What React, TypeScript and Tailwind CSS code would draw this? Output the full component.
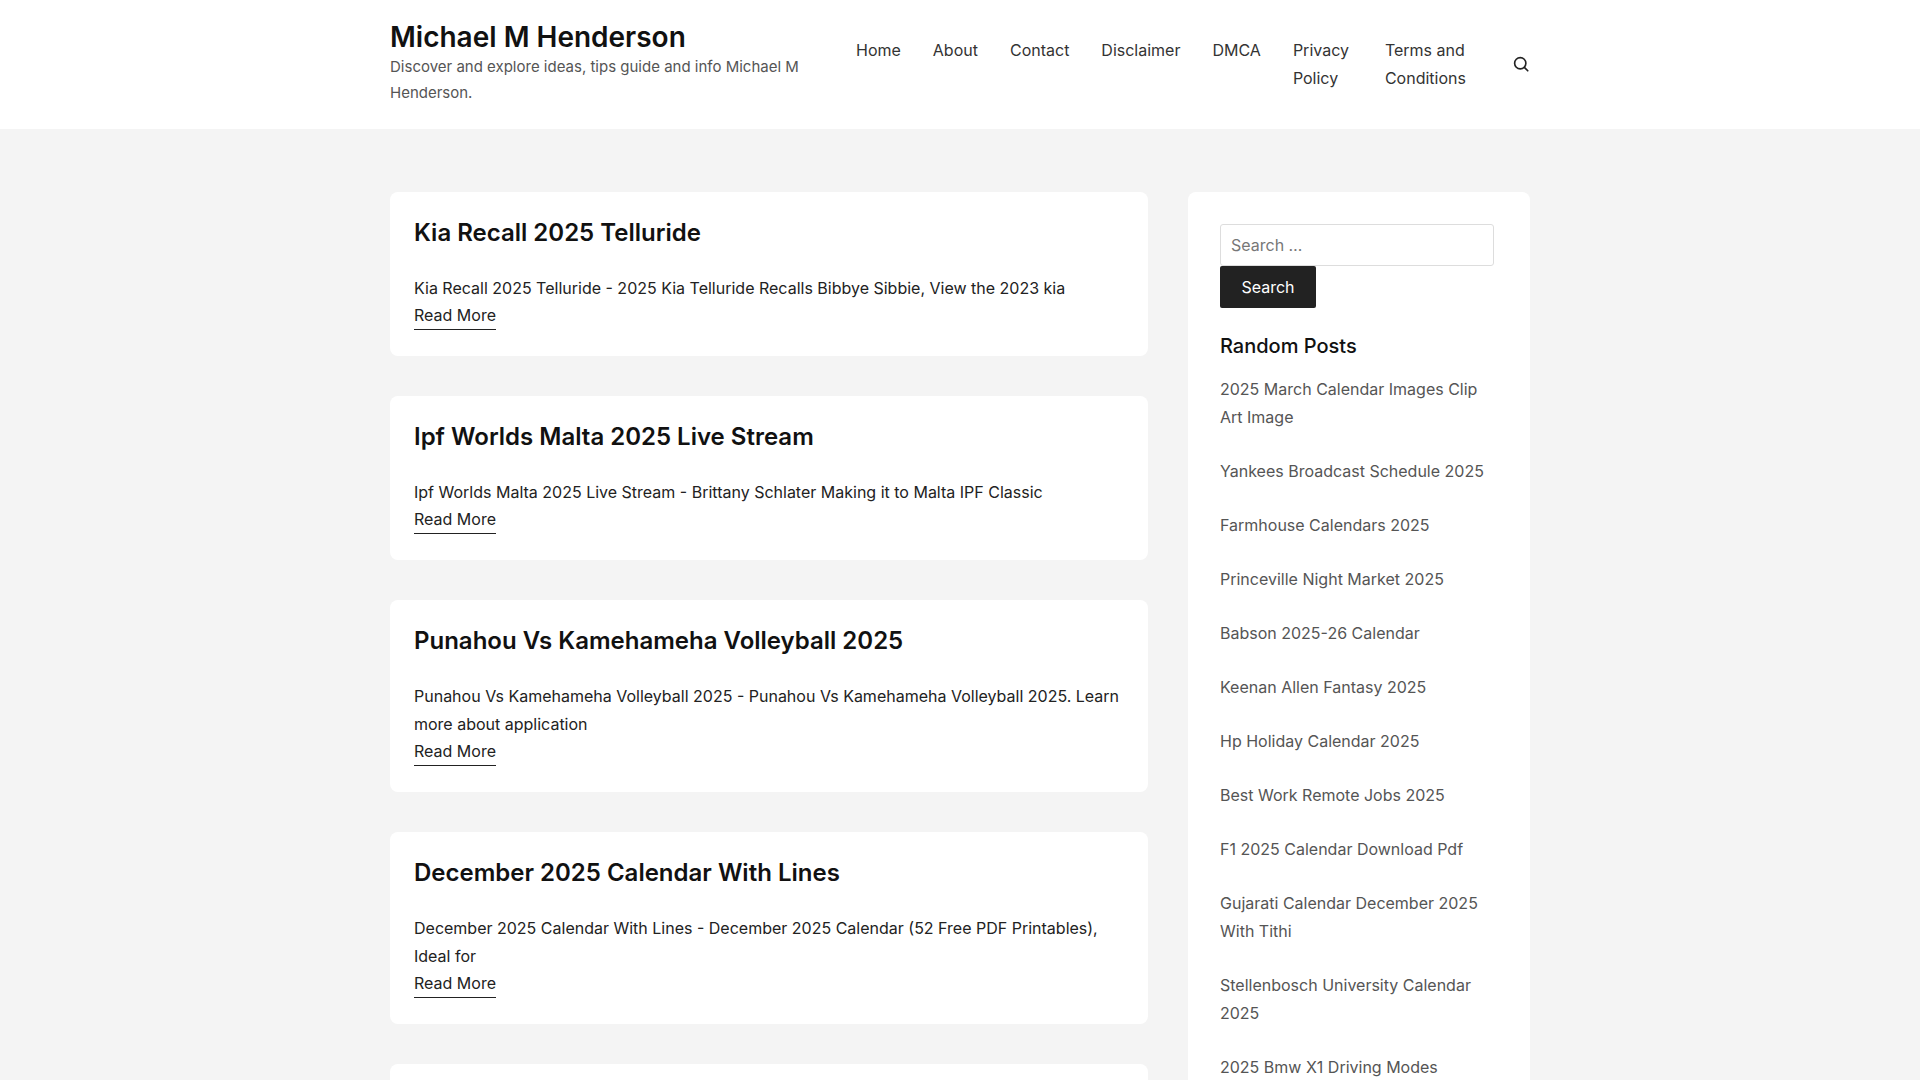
import React from "react";

const posts = [
  { t: "Kia Recall 2025 Telluride", e: "Kia Recall 2025 Telluride - 2025 Kia Telluride Recalls Bibbye Sibbie, View the 2023 kia" },
  { t: "Ipf Worlds Malta 2025 Live Stream", e: "Ipf Worlds Malta 2025 Live Stream - Brittany Schlater Making it to Malta IPF Classic" },
  { t: "Punahou Vs Kamehameha Volleyball 2025", e: "Punahou Vs Kamehameha Volleyball 2025 - Punahou Vs Kamehameha Volleyball 2025. Learn more about application" },
  { t: "December 2025 Calendar With Lines", e: "December 2025 Calendar With Lines - December 2025 Calendar (52 Free PDF Printables), Ideal for" },
  { t: "Cal Poly Academic Calendar 2025", e: "Cal Poly Academic Calendar 2025 - Academic calendar overview" },
];

const random = [
  "2025 March Calendar Images Clip Art Image",
  "Yankees Broadcast Schedule 2025",
  "Farmhouse Calendars 2025",
  "Princeville Night Market 2025",
  "Babson 2025-26 Calendar",
  "Keenan Allen Fantasy 2025",
  "Hp Holiday Calendar 2025",
  "Best Work Remote Jobs 2025",
  "F1 2025 Calendar Download Pdf",
  "Gujarati Calendar December 2025 With Tithi",
  "Stellenbosch University Calendar 2025",
  "2025 Bmw X1 Driving Modes",
  "Calendar 2025 Holidays",
];

export default function App() {
  return (
    <div className="h-screen overflow-y-scroll bg-[#f4f4f4] text-[#222]" style={{ fontFamily: "Inter, 'Noto Sans', sans-serif" }}>
      <header className="bg-white h-[129px]">
        <div className="w-[1140px] mx-auto flex pt-[20px]">
          <div className="w-[420px]">
            <div className="text-[28px] font-semibold leading-[34px] text-[#111]">Michael M Henderson</div>
            <div className="text-[15px] leading-[26px] text-[#555] w-[420px]">Discover and explore ideas, tips guide and info Michael M Henderson.</div>
          </div>
          <nav className="flex ml-[46px] mt-[16px] text-[16px] leading-[28px] text-[#333]">
            <a className="mr-[32px]">Home</a>
            <a className="mr-[32px]">About</a>
            <a className="mr-[32px]">Contact</a>
            <a className="mr-[32px]">Disclaimer</a>
            <a className="mr-[32px]">DMCA</a>
            <a className="mr-[34px] w-[58px]">Privacy Policy</a>
            <a className="w-[90px]">Terms and Conditions</a>
          </nav>
          <div className="ml-auto mt-[35px]">
            <svg width="18" height="18" viewBox="0 0 24 24" fill="none" stroke="#222" strokeWidth="2.2" strokeLinecap="round"><circle cx="11" cy="11" r="7.5" /><path d="M21 21l-4.5-4.5" /></svg>
          </div>
        </div>
      </header>
      <div className="w-[1140px] mx-auto flex gap-[40px] pt-[63px]">
        <main className="w-[758px] flex flex-col gap-[40px]">
          {posts.map((p) => (
            <article key={p.t} className="bg-white rounded-[8px] px-[24px] pt-[23px] pb-[26px]">
              <h2 className="text-[24px] font-semibold leading-[36px] text-[#111] mb-[23px]">{p.t}</h2>
              <p className="text-[16px] leading-[28px] text-[#222]">{p.e}</p>
              <a className="text-[16px] leading-[27px] border-b border-[#222] inline-block">Read More</a>
            </article>
          ))}
        </main>
        <aside className="w-[342px] bg-white rounded-[8px] px-[32px] pt-[32px] self-start pb-[30px]">
          <div className="w-[274px] h-[42px] border border-[#ddd] rounded-[3px] px-[10px] flex items-center text-[16px] text-[#777]">Search …</div>
          <button className="bg-[#222] text-white text-[16px] h-[42px] w-[96px] rounded-[2px]">Search</button>
          <h3 className="text-[20px] font-medium leading-[30px] mt-[23px] mb-[14px] text-[#111]">Random Posts</h3>
          {random.map((r) => (
            <div key={r} className="text-[16px] leading-[28px] text-[#555] mb-[26px]">{r}</div>
          ))}
        </aside>
      </div>
    </div>
  );
}
